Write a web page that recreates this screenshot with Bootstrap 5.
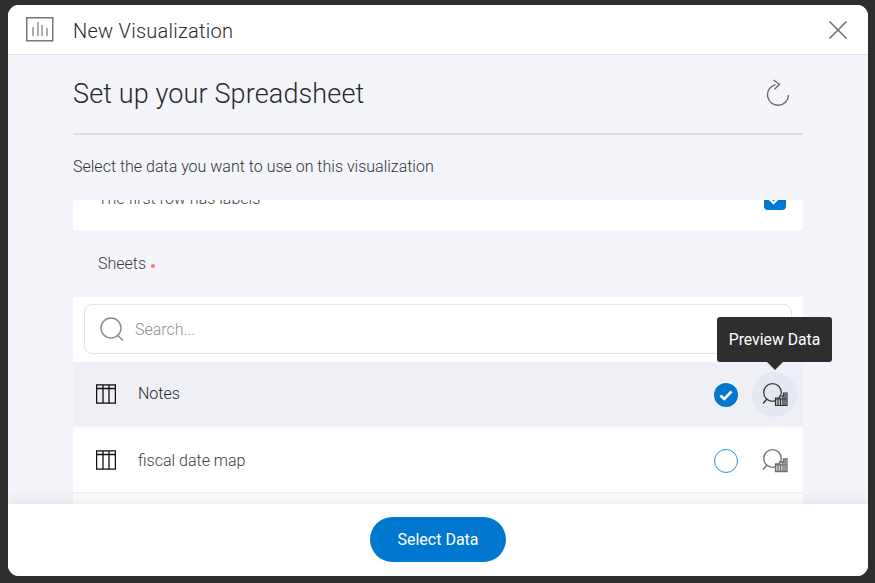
<!DOCTYPE html>
<html lang="en">
<head>
<meta charset="utf-8">
<title>New Visualization</title>
<link href="https://cdn.jsdelivr.net/npm/bootstrap@5.3.0/dist/css/bootstrap.min.css" rel="stylesheet">
<style>
html,body{height:100%}
body{background:#2e2e2e;font-family:Roboto,"Liberation Sans",sans-serif;color:#3a3a3c;overflow:hidden;padding:5px 7px 7px 8px}
.dlg{height:571px;border-radius:11px;overflow:hidden;background:#f4f5fa}
.dlg-head{height:50px;background:#fff;border-bottom:1px solid #e3e3e6;padding:0 20px 0 18px;flex:none}
.dlg-title{font-size:20px;font-weight:300;letter-spacing:.26px;color:#2b2b2b;margin-left:19px;line-height:1;padding-top:2px}
.dlg-main{flex:1 1 auto;min-height:0;padding:0 65px;position:relative}
.setup-head{height:80px;border-bottom:2px solid #dcdde2;flex:none;padding-right:13px}
.setup-title{font-size:27px;font-weight:300;letter-spacing:.13px;color:#2a2a2c;margin:0;line-height:1;padding-top:1px}
.setup-icon{margin-bottom:3px}
.setup-sub{font-size:16px;font-weight:300;color:#333335;height:65px;flex:none;padding-top:22px;line-height:20px;margin:0}
.scroller{flex:1 1 auto;min-height:0;overflow:hidden}
.first-row{height:30px;background:#fff;overflow:hidden;padding:0 17px 0 25px}
.first-label{font-size:16px;font-weight:300;color:#444;line-height:18px;margin-top:-10px}
.first-check{width:22px;height:22px;background:#0078cf;border-radius:4px;margin-top:-12px;flex:none;display:flex;align-items:center;justify-content:center}
.sheets-band{height:67px;padding-left:25px;padding-top:1px;font-size:16px;font-weight:300;color:#3c3c3c}
.req{width:4px;height:4px;border-radius:50%;background:#f47c7c;margin-left:5px;margin-top:3px}
.search-wrap{background:#fff;height:65px;padding:7px 11px 9px}
.search-box{height:50px;border:1px solid #e3e3e6;border-radius:8px;padding:0 14px;background:#fff}
.search-text{font-size:16px;font-weight:300;color:#8f8f8f;margin-left:9px;padding-top:2px}
.sheet-row{height:66px;padding:0 6px 0 23px;background:#fff;font-size:16px;font-weight:300;color:#3c3c3c;border-bottom:2px solid #f4f5fa}
.sheet-row.on{background:#eff0f6;color:#262628;border-bottom-color:#f9f9fc}
.sheet-name{margin-left:22px;flex:1 1 auto;padding-top:1px}
.on .sheet-name{padding-top:0;padding-bottom:1px}
.radio-on,.radio-off{width:24px;height:24px;border-radius:50%;flex:none;margin-right:14px;margin-top:2px;display:flex;align-items:center;justify-content:center}
.radio-on{background:#0078cf}
.radio-off{border:1.5px solid #2f8fd8;background:#fff}
.prev-btn{width:45px;height:45px;border-radius:50%;flex:none;margin-top:1px;display:flex;align-items:center;justify-content:center}
.on .prev-btn{background:#e4e8f3}
.tip{position:absolute;left:709px;top:262px;width:115px;height:45px;background:#2e2e2e;color:#fff;border-radius:3px;font-size:15.75px;font-weight:400;display:flex;align-items:center;justify-content:center;white-space:nowrap;z-index:5}
.tip::after{content:"";position:absolute;left:50%;margin-left:-8px;bottom:-8px;border:8px solid transparent;border-bottom:0;border-top-color:#2e2e2e}
.rest-row{height:10px;background:#fff}
.dlg-foot{height:72px;background:#fff;flex:none;box-shadow:0 -3px 12px rgba(30,30,60,.09);position:relative;padding-top:13px}
.btn-sel{background:#0078cf;color:#fff;border:0;border-radius:23px;width:136px;height:45px;font-size:16px;font-weight:400;padding:1px 0 0}
.btn-sel:hover{background:#0078cf;color:#fff}
svg{display:block;flex:none}
</style>
</head>
<body>
<div class="dlg d-flex flex-column">
  <header class="dlg-head d-flex align-items-center">
    <svg width="28" height="25" viewBox="0 0 28 25" fill="none" stroke="#777"><rect x=".75" y=".75" width="26" height="23" stroke-width="1.5"/><path d="M7 19v-9M12 19V5M16 19V8M21 19v-8" stroke="#8c8c8c" stroke-width="1.4"/></svg>
    <div class="dlg-title flex-grow-1">New Visualization</div>
    <svg width="20" height="20" viewBox="0 0 20 20" stroke="#6f6f6f" stroke-width="1.6"><path d="M1.5 1.5l17 17M18.5 1.5l-17 17"/></svg>
  </header>
  <div class="dlg-main d-flex flex-column">
    <div class="setup-head d-flex align-items-center justify-content-between">
      <h2 class="setup-title">Set up your Spreadsheet</h2>
      <svg class="setup-icon" width="24" height="27" viewBox="0 0 24 27" fill="none" stroke="#6b6b6b" stroke-width="1.4"><path d="M9.5 5.6A10.5 10.5 0 1 0 22.5 16"/><path d="M7.5 1l6 4.3-5 5"/></svg>
    </div>
    <p class="setup-sub">Select the data you want to use on this visualization</p>
    <div class="scroller d-flex flex-column">
      <div class="first-row d-flex justify-content-between">
        <div class="first-label">The first row has labels</div>
        <div class="first-check"><svg width="14" height="11" viewBox="0 0 14 11" fill="none" stroke="#fff" stroke-width="2.4"><path d="M1.5 5l4 4 7-7"/></svg></div>
      </div>
      <div class="sheets-band d-flex align-items-center"><span>Sheets</span><span class="req"></span></div>
      <div class="search-wrap">
        <div class="search-box d-flex align-items-center">
          <svg width="27" height="27" viewBox="0 0 27 27" fill="none" stroke="#8c8c8c" stroke-width="1.5"><circle cx="12" cy="12" r="10"/><path d="M19 19.5l5 5"/></svg>
          <span class="search-text">Search...</span>
        </div>
      </div>
      <div class="sheet-row on d-flex align-items-center">
        <svg width="20" height="20" viewBox="0 0 20 20" fill="none" stroke="#111" stroke-width="1.3"><rect x=".6" y=".9" width="18.8" height="18.2"/><path d="M.6 4.5h18.8M7 .9v18.2M13 .9v18.2"/></svg>
        <span class="sheet-name">Notes</span>
        <span class="radio-on"><svg width="14" height="11" viewBox="0 0 14 11" fill="none" stroke="#fff" stroke-width="2.6"><path d="M1.5 5.5l3.8 3.5 7.2-7.5"/></svg></span>
        <div class="prev-btn">
          <svg width="26" height="24" viewBox="0 0 26 24" fill="none" stroke="#333" stroke-width="1.2"><circle cx="10.5" cy="9.5" r="8.8"/><path d="M5 16L1 20.5"/><path d="M13.5 22.5V15h4v-2h4v-3h3.5v12.5z" fill="#c9ccd4"/><path d="M13.5 16h11.5M16 15v7.5M18.5 15v7.5M21 13v9.5M23 11v11.5" stroke-width="1.2"/></svg>
        </div>
      </div>
      <div class="sheet-row d-flex align-items-center">
        <svg width="20" height="20" viewBox="0 0 20 20" fill="none" stroke="#111" stroke-width="1.3"><rect x=".6" y=".9" width="18.8" height="18.2"/><path d="M.6 4.5h18.8M7 .9v18.2M13 .9v18.2"/></svg>
        <span class="sheet-name">fiscal date map</span>
        <span class="radio-off"></span>
        <div class="prev-btn">
          <svg width="26" height="24" viewBox="0 0 26 24" fill="none" stroke="#6e6e6e" stroke-width="1.3"><circle cx="10.5" cy="9.5" r="8.8"/><path d="M5 16L1 20.5"/><path d="M13.5 22.5V15h4v-2h4v-3h3.5v12.5z" fill="#d8d8d8"/><path d="M13.5 16h11.5M16 15v7.5M18.5 15v7.5M21 13v9.5M23 11v11.5" stroke-width="1.2"/></svg>
        </div>
      </div>
      <div class="rest-row"></div>
    </div>
    <div class="tip">Preview Data</div>
  </div>
  <footer class="dlg-foot d-flex justify-content-center">
    <div><button type="button" class="btn btn-sel">Select Data</button></div>
  </footer>
</div>
<script src="https://cdn.jsdelivr.net/npm/bootstrap@5.3.0/dist/js/bootstrap.bundle.min.js"></script>
</body>
</html>
